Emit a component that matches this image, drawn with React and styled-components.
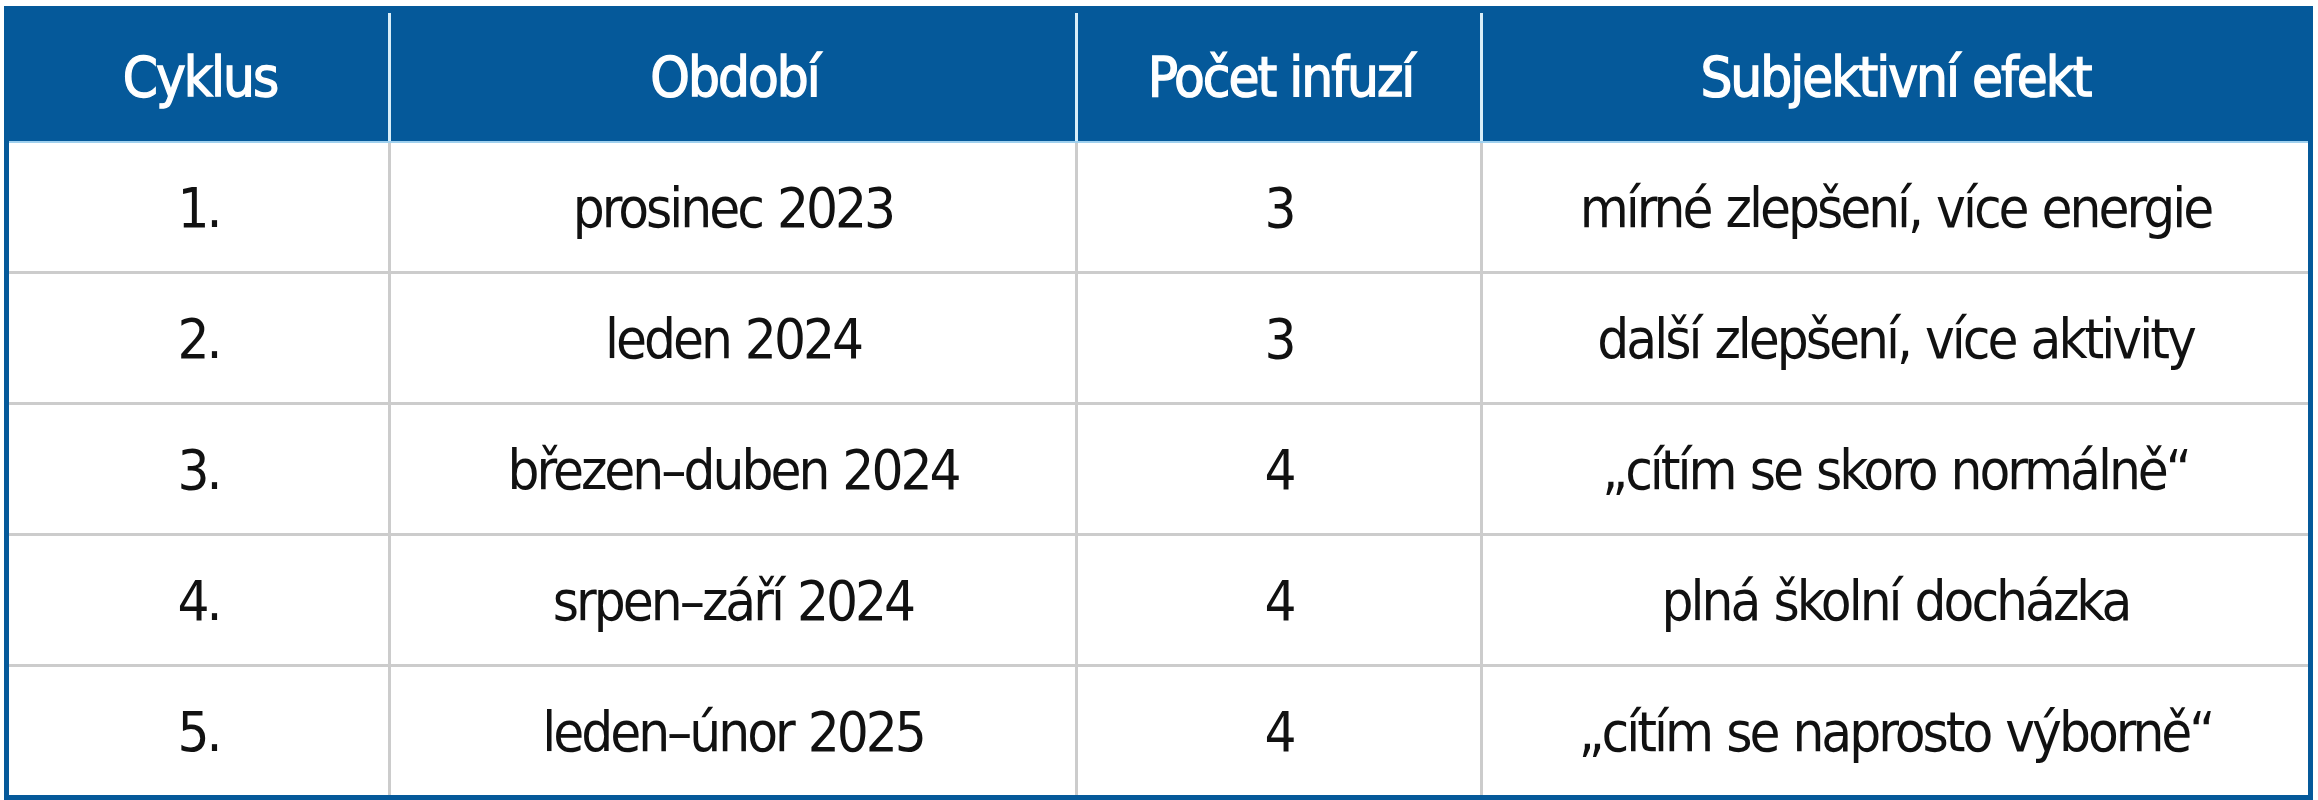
import React from "react";
import styled, { createGlobalStyle } from "styled-components";

const GlobalStyle = createGlobalStyle`
  html, body {
    margin: 0;
    padding: 0;
    background: #ffffff;
  }
  body {
    font-family: "DejaVu Sans Condensed", "Liberation Sans Narrow", "Liberation Sans", sans-serif;
  }
`;

const columns = "382px 687px 405px 825px";

const rows = [
  ["1.", "prosinec 2023", "3", "mírné zlepšení, více energie"],
  ["2.", "leden 2024", "3", "další zlepšení, více aktivity"],
  ["3.", "březen–duben 2024", "4", "„cítím se skoro normálně“"],
  ["4.", "srpen–září 2024", "4", "plná školní docházka"],
  ["5.", "leden–únor 2025", "4", "„cítím se naprosto výborně“"],
];

const headers = ["Cyklus", "Období", "Počet infuzí", "Subjektivní efekt"];

function App() {
  return (
    <>
      <GlobalStyle />
      <Page>
        <Table>
          <HeadRow>
            {headers.map((h, i) => (
              <HeadCell key={h} last={i === headers.length - 1}>
                {h}
              </HeadCell>
            ))}
          </HeadRow>
          {rows.map((row, r) => (
            <BodyRow key={r} last={r === rows.length - 1}>
              {row.map((c, i) => (
                <Cell key={i} last={i === row.length - 1}>
                  {c}
                </Cell>
              ))}
            </BodyRow>
          ))}
        </Table>
      </Page>
    </>
  );
}

const Page = styled.div`
  padding: 6px 0 0 4px;
`;

const Table = styled.div`
  width: 2309px;
  box-sizing: border-box;
  border: 5px solid #05599a;
  display: flex;
  flex-direction: column;
`;

const HeadRow = styled.div`
  display: grid;
  grid-template-columns: ${columns};
  height: 130px;
  background: #05599a;
  border-bottom: 2px solid #9fd0ee;
`;

const HeadCell = styled.div`
  display: flex;
  align-items: center;
  justify-content: center;
  color: #ffffff;
  font-size: 56px;
  font-weight: 400;
  letter-spacing: -2px;
  -webkit-text-stroke: 1.3px #ffffff;
  background: ${(p) =>
    p.last
      ? "none"
      : "linear-gradient(#d8eef9, #d8eef9) no-repeat right bottom / 3px calc(100% - 2px)"};
`;

const BodyRow = styled.div`
  display: grid;
  grid-template-columns: ${columns};
  height: ${(p) => (p.last ? "128px" : "131px")};
  box-sizing: border-box;
  border-bottom: ${(p) => (p.last ? "none" : "3px solid #cccccc")};
`;

const Cell = styled.div`
  display: flex;
  align-items: center;
  justify-content: center;
  color: #111111;
  font-size: 56px;
  letter-spacing: -3px;
  word-spacing: 2px;
  border-right: ${(p) => (p.last ? "none" : "3px solid #cccccc")};
`;

export default App;
